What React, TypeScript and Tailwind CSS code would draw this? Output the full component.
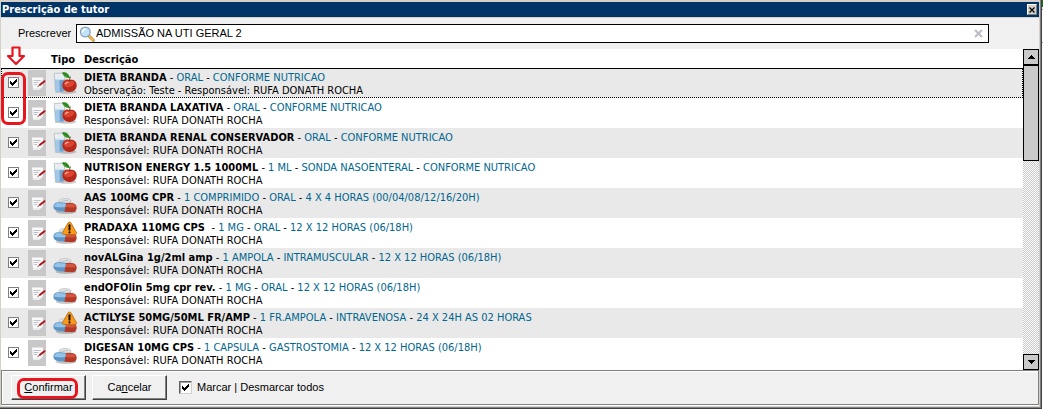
import { useState } from 'react';

type Kind = 'diet' | 'drug' | 'alert';

interface Item {
  name: string;
  kind: Kind;
  details: string[];
  note?: string;
}

const items: Item[] = [
  { name: 'DIETA BRANDA', kind: 'diet', details: ['ORAL', 'CONFORME NUTRICAO'], note: 'Observação: Teste - ' },
  { name: 'DIETA BRANDA LAXATIVA', kind: 'diet', details: ['ORAL', 'CONFORME NUTRICAO'] },
  { name: 'DIETA BRANDA RENAL CONSERVADOR', kind: 'diet', details: ['ORAL', 'CONFORME NUTRICAO'] },
  { name: 'NUTRISON ENERGY 1.5 1000ML', kind: 'diet', details: ['1 ML', 'SONDA NASOENTERAL', 'CONFORME NUTRICAO'] },
  { name: 'AAS 100MG CPR', kind: 'drug', details: ['1 COMPRIMIDO', 'ORAL', '4 X 4 HORAS (00/04/08/12/16/20H)'] },
  { name: 'PRADAXA 110MG CPS ', kind: 'alert', details: ['1 MG', 'ORAL', '12 X 12 HORAS (06/18H)'] },
  { name: 'novALGina 1g/2ml amp', kind: 'drug', details: ['1 AMPOLA', 'INTRAMUSCULAR', '12 X 12 HORAS (06/18H)'] },
  { name: 'endOFOlin 5mg cpr rev.', kind: 'drug', details: ['1 MG', 'ORAL', '12 X 12 HORAS (06/18H)'] },
  { name: 'ACTILYSE 50MG/50ML FR/AMP', kind: 'alert', details: ['1 FR.AMPOLA', 'INTRAVENOSA', '24 X 24H AS 02 HORAS'] },
  { name: 'DIGESAN 10MG CPS', kind: 'drug', details: ['1 CAPSULA', 'GASTROSTOMIA', '12 X 12 HORAS (06/18H)'] },
];

function CheckMark() {
  return (
    <svg viewBox="0 0 7 7" shapeRendering="crispEdges" className="pointer-events-none invisible col-start-1 row-start-1 size-[7px] place-self-center peer-checked:visible">
      <path d="M0 2h1v3H0zM1 3h1v3H1zM2 4h1v3H2zM3 3h1v3H3zM4 2h1v3H4zM5 1h1v3H5zM6 0h1v3H6z" fill="#000" />
    </svg>
  );
}

function NoteIcon() {
  return (
    <svg viewBox="0 0 18 26" className="block h-[26px] w-[18px]">
      <path d="M4 7.500h11V16l-2 2.500-8 1z" fill="#fafafa" />
      <path d="M5 18h8l-1.500 2H5z" fill="#ececec" />
      <path d="M5.500 10.500h7M5.500 12.500h5M6 14.500h3" stroke="#c0c0c8" strokeWidth="1" />
      <path d="M16.500 11.200 12 14.800" stroke="#b5121b" strokeWidth="2" strokeLinecap="round" />
      <path d="M11.500 15.200 9.500 16.700" stroke="#7a3a3a" strokeWidth="1" />
    </svg>
  );
}

function DietIcon() {
  return (
    <svg viewBox="0 0 24 24" className="block size-6">
      <ellipse cx="14" cy="20.800" rx="9.500" ry="1.900" fill="#000" opacity=".2" />
      <path d="M1.200 2.300h10.600l-.8 19.200H2.500z" fill="#e9eef1" stroke="#b3bcc2" strokeWidth=".8" />
      <path d="M1.900 8.500h9.500l-.7 12.300H3z" fill="#6f9fc9" />
      <path d="M1.900 8.500h4.600l.3 12.300H3z" fill="#a3c8e6" />
      <path d="M2.200 8.500h9" stroke="#c5e0f3" strokeWidth="1.200" />
      <path d="M10.500 10.500c1.500-2.200 4-2.500 6.300-1.500 2.800-.9 6.700.5 6.900 5 .1 4-2.700 7-6.700 7s-7-2.200-7.500-5.500c-.2-2 .1-3.600 1-5z" fill="#b52a1c" />
      <path d="M11.200 11.500c1.300-2 3.500-2 5.600-1.100 1.700-.7 3.700-.2 4.700 1.300-1 3.300-4.500 4.800-8 4.500-2.300-.4-3.200-2.400-2.300-4.700z" fill="#dc4430" />
      <path d="M12.500 12.700c.6-1.100 1.500-1.500 2.500-1.400" stroke="#f7b5a5" strokeWidth="1.300" fill="none" strokeLinecap="round" />
      <path d="M16.800 10c-.1-1.500-.1-3 .4-4.500" stroke="#5b3a1a" strokeWidth="1" fill="none" />
      <path d="M9 1.500c3.500-1.200 7 .5 7.800 5.500-3.500.3-6.500-1.500-7.800-5.500z" fill="#3c9a2c" />
      <path d="M9.800 2c2.500.9 4.800 2.500 6.700 4.600" stroke="#1d6a1a" strokeWidth=".8" fill="none" />
    </svg>
  );
}

function DrugIcon({ alert }: { alert: boolean }) {
  return (
    <svg viewBox="0 0 24 24" className="block size-6">
      <ellipse cx="13" cy="20.800" rx="10.500" ry="2.200" fill="#000" opacity=".22" />
      <path d="M6 9.800h12v4.500H6z" fill="#b9bec1" />
      <ellipse cx="12" cy="9.800" rx="6" ry="2.300" fill="#dfe3e5" stroke="#b1b7ba" strokeWidth=".6" />
      <path d="M8.500 10.600l7-1.400" stroke="#b3b9bd" strokeWidth=".8" />
      <path d="M12 12h7c3 .2 4.800 2.200 4.700 4.900-.1 2.800-2 4.400-5 4.300l-7.700-.4z" fill="#b33a26" />
      <path d="M12.500 12.700h6.300c2.300.1 3.700 1.400 4 3.200-3.500 1-7.300.8-10.800.2z" fill="#d4553d" />
      <path d="M5.500 11.300l7.500.8-1.500 8.700-6-.6C1.900 19.700.1 17.800.4 15.200c.3-2.500 2.300-4.100 5.100-3.900z" fill="#6096c4" />
      <path d="M5.400 12l7.400.8-.5 3.300c-4 .5-8 .3-11.200-.7.3-2.100 2-3.500 4.300-3.400z" fill="#93c3e8" />
      {alert && (
        <>
          <path d="M16.500 1c.8 0 1.200.4 1.600 1.100l5.300 9.400c.6 1.100 0 2-1.200 2H10.800c-1.200 0-1.800-.9-1.200-2l5.300-9.400C15.300 1.400 15.700 1 16.500 1z" fill="#f99a1c" stroke="#b06a10" strokeWidth=".8" />
          <path d="M16.500 4.300v4.400" stroke="#1c1200" strokeWidth="2" strokeLinecap="round" />
          <circle cx="16.500" cy="11.400" r="1.100" fill="#1c1200" />
        </>
      )}
    </svg>
  );
}

function SearchIcon() {
  return (
    <svg viewBox="0 0 16 16" className="size-4 shrink-0">
      <path d="M10 10l4.300 4.300" stroke="#b98122" strokeWidth="3" strokeLinecap="round" />
      <path d="M10.300 10.300l3.800 3.800" stroke="#f3c25c" strokeWidth="1.600" strokeLinecap="round" />
      <circle cx="6.300" cy="6" r="4.900" fill="#bfe3f8" stroke="#8fa3c0" strokeWidth="1.300" />
      <path d="M3.500 5.800c.2-1.600 1.200-2.500 2.800-2.700" stroke="#fff" strokeWidth="1.400" fill="none" strokeLinecap="round" />
    </svg>
  );
}

function ScrollButton({ up }: { up: boolean }) {
  return (
    <button type="button" aria-label={up ? 'Rolar para cima' : 'Rolar para baixo'} className="grid h-4 w-full shrink-0 place-items-center border border-black bg-[#cacaca]">
      <svg viewBox="0 0 7 4" shapeRendering="crispEdges" className="h-1 w-[7px]">
        <path d={up ? 'M3 0h1v1h1v1h1v1h1v1H0V3h1V2h1V1h1z' : 'M0 0h7v1H6v1H5v1H4v1H3V3H2V2H1V1H0z'} />
      </svg>
    </button>
  );
}

const pushButton =
  'h-[25px] w-[75px] border border-t-white border-l-white border-r-[#404040] border-b-[#404040] bg-[#f0f0f0] text-center shadow-[inset_-1px_-1px_0_#808080]';

export default function App() {
  const [checked, setChecked] = useState<boolean[]>(items.map(() => true));
  const [search, setSearch] = useState('ADMISSÃO NA UTI GERAL 2');
  const all = checked.every(Boolean);

  return (
    <div className="flex bg-white font-['DejaVu_Sans_Condensed','DejaVu_Sans',sans-serif] text-[11px] leading-[13px] text-black">
      <main className="min-w-0 flex-1 border-r border-b border-[#404040]">
        <div className="border-r border-b border-[#808080]">
          <div className="border border-t-2 border-b-2 border-[#d4d0c8] bg-[#f0f0f0]">
            <header className="flex h-4 items-center justify-between border-b border-[#d4d0c8] bg-[#003366] pr-0.5 pl-px">
              <h1 className="font-bold text-white">Prescrição de tutor</h1>
              <button type="button" aria-label="Fechar" className="grid h-[11px] w-[10px] place-items-center border border-t-white border-l-white border-r-[#808080] border-b-[#808080] bg-[#d4d0c8]">
                <svg viewBox="0 0 6 6" className="size-1.5">
                  <path d="M.5.5l5 5M5.500.5l-5 5" stroke="#000" strokeWidth="1.200" />
                </svg>
              </button>
            </header>

            <div className="flex h-[31px] items-center pr-[50px] pl-4 font-['Liberation_Sans',Arial,sans-serif]">
              <label htmlFor="search" className="w-[59px] shrink-0 pl-px">Prescrever</label>
              <div className="flex h-[19px] min-w-0 flex-1 items-center border border-black bg-white pr-1 pl-0.5">
                <SearchIcon />
                <input id="search" value={search} onChange={(e) => setSearch(e.target.value)} className="min-w-0 flex-1 pl-px outline-none" />
                <button type="button" aria-label="Limpar" onClick={() => setSearch('')} className="grid size-3 place-items-center">
                  <svg viewBox="0 0 9 9" className="size-[9px]">
                    <path d="M1 1l7 7M8 1L1 8" stroke="#bcbcc6" strokeWidth="2" />
                  </svg>
                </button>
              </div>
            </div>

            <div className="flex">
              <div className="relative min-w-0 flex-1 bg-white pb-0.5">
                <table className="w-full table-fixed border-collapse text-left">
                  <colgroup>
                    <col className="w-[27px]" />
                    <col className="w-[23px]" />
                    <col className="w-[33px]" />
                    <col />
                  </colgroup>
                  <thead>
                    <tr className="h-[19px] border-b border-black">
                      <th aria-label="Selecionar" />
                      <th aria-label="Nota" />
                      <th className="p-0 pt-0.5 font-bold">Tipo</th>
                      <th className="p-0 pt-0.5 font-bold">Descrição</th>
                    </tr>
                  </thead>
                  <tbody>
                    {items.map((item, i) => (
                      <tr key={item.name} className="h-[30px] odd:bg-[#e9e9e9] first:outline first:-outline-offset-1 first:outline-dotted first:outline-black">
                        <td className="p-0 pb-0.5">
                          <label className="ml-[7px] grid size-[11px]">
                            <input
                              type="checkbox"
                              aria-label={item.name}
                              checked={checked[i]}
                              onChange={() => setChecked(checked.map((c, n) => (n === i ? !c : c)))}
                              className="peer col-start-1 row-start-1 size-[11px] appearance-none border border-[#808080] bg-white"
                            />
                            <CheckMark />
                          </label>
                        </td>
                        <td className="p-0">
                          <div className="w-[18px] bg-[#c8c8c8]">
                            <NoteIcon />
                          </div>
                        </td>
                        <td className="p-0 pl-0.5">
                          {item.kind === 'diet' ? <DietIcon /> : <DrugIcon alert={item.kind === 'alert'} />}
                        </td>
                        <td className="truncate p-0 pt-0.5">
                          <p className="truncate whitespace-pre">
                            <b>{item.name}</b>
                            {item.details.map((d) => (
                              <span key={d}>
                                {' - '}
                                <span className="text-[#00668f]">{d}</span>
                              </span>
                            ))}
                          </p>
                          <p className="truncate">{item.note}Responsável: RUFA DONATH ROCHA</p>
                        </td>
                      </tr>
                    ))}
                  </tbody>
                </table>
                <svg viewBox="0 0 20 20" className="absolute top-[-3px] left-[5px] size-5" aria-hidden="true">
                  <path d="M6.500 1.500h7v8.500h4.500l-8 8-8-8h4.500z" fill="#fff" fillOpacity=".6" stroke="#e8141e" strokeWidth="2.200" strokeLinejoin="round" />
                </svg>
                <div className="pointer-events-none absolute top-[23px] left-0 h-[53px] w-[25px] rounded-[7px] border-[3px] border-[#e8141e]" />
              </div>
              <div className="flex w-4 flex-col bg-white bg-[repeating-conic-gradient(#c8c8c8_0_25%,#fff_0_50%)] bg-[length:2px_2px]">
                <ScrollButton up />
                <div className="h-[30%] w-full border border-black bg-[#cacaca]" />
                <div className="flex-1" />
                <ScrollButton up={false} />
              </div>
            </div>

            <footer className="flex h-[35px] items-center border border-[#808080] pl-[9px] font-['Liberation_Sans',Arial,sans-serif] shadow-[inset_1px_1px_0_#fff,0_1px_0_#fff]">
              <button type="button" className={`${pushButton} relative`}>
                <u>C</u>onfirmar
                <span className="pointer-events-none absolute top-0.5 left-[5px] h-[21px] w-[61px] rounded-[7px] border-[3px] border-[#e8141e]" />
              </button>
              <button type="button" className={`${pushButton} ml-1.5`}>
                Ca<u>n</u>celar
              </button>
              <div className="ml-3 flex items-center">
                <span className="grid size-[13px]">
                  <input
                    id="all"
                    type="checkbox"
                    checked={all}
                    onChange={() => setChecked(items.map(() => !all))}
                    className="peer col-start-1 row-start-1 size-[13px] appearance-none border border-t-[#606060] border-l-[#606060] border-r-[#d4d0c8] border-b-[#d4d0c8] bg-white shadow-[inset_1px_1px_0_#a0a0a0]"
                  />
                  <CheckMark />
                </span>
                <label htmlFor="all" className="pl-[5px]">Marcar | Desmarcar todos</label>
              </div>
            </footer>
          </div>
        </div>
      </main>
      <div className="w-px bg-white" aria-hidden="true">
        <div className="h-[7px] bg-[#1c6b1c]" />
        <div className="mt-0.5 h-px bg-[#a0a0a0]" />
        <div className="mt-8 h-px bg-[#a0a0a0]" />
      </div>
    </div>
  );
}
